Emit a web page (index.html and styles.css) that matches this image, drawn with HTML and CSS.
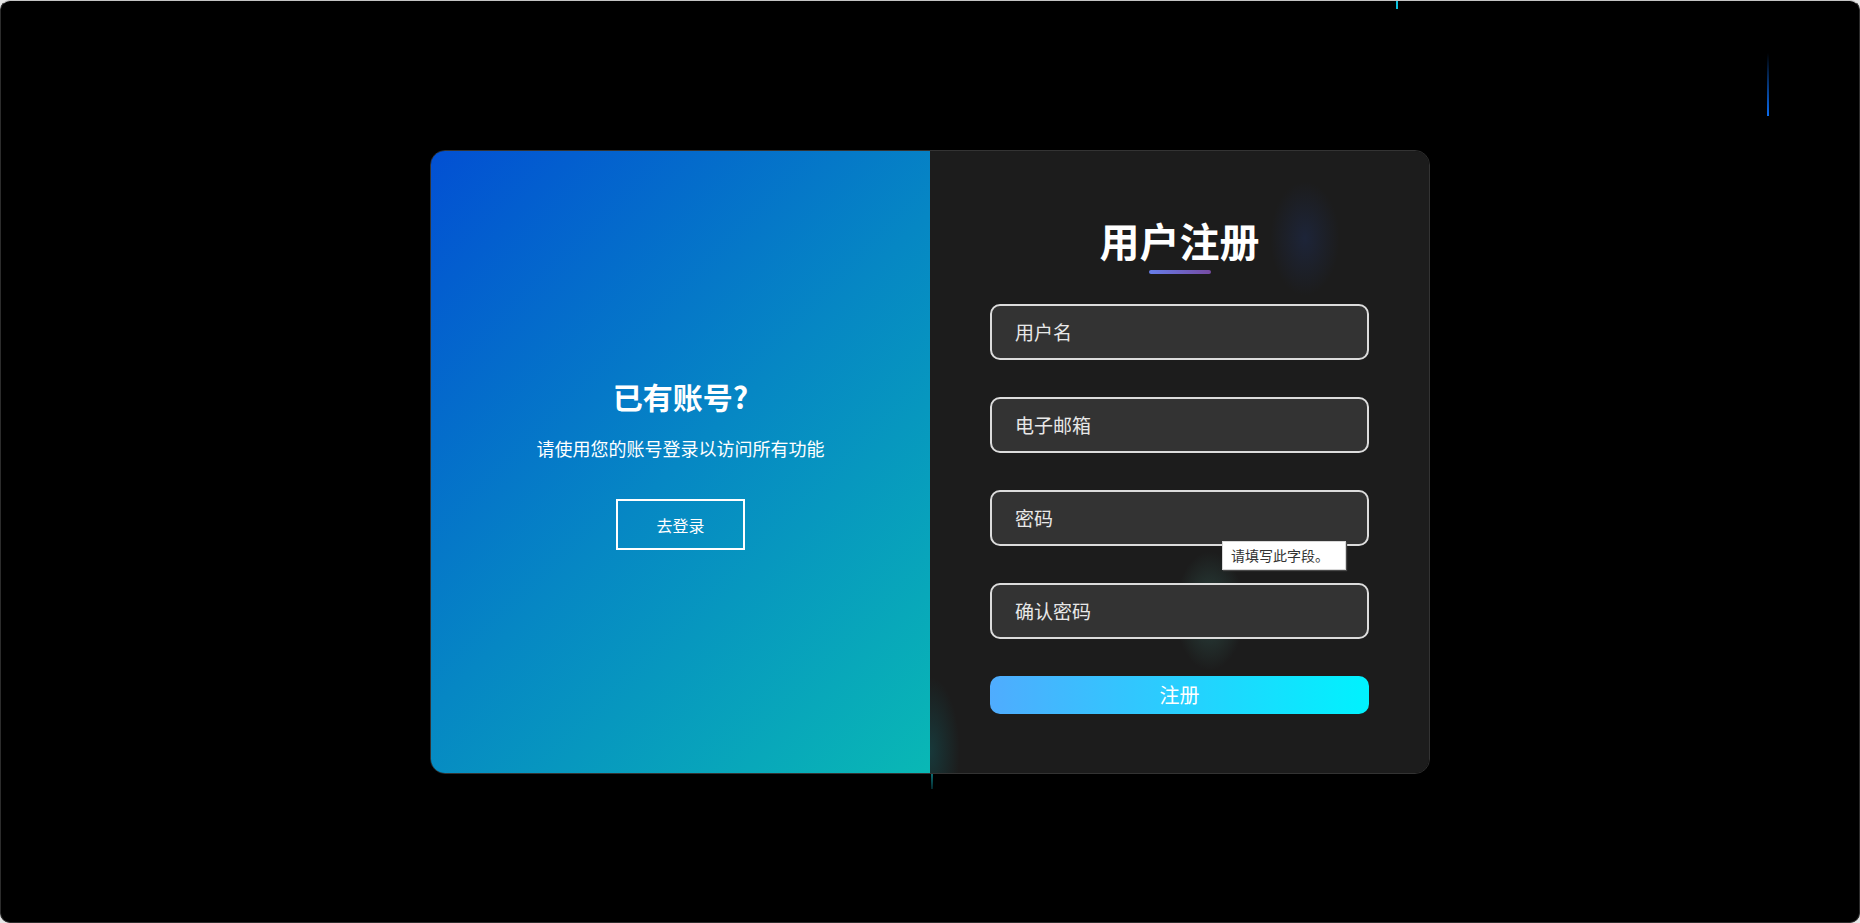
FILE: index.html
```html
<!DOCTYPE html>
<html lang="zh-CN">
<head>
<meta charset="utf-8">
<title>用户注册</title>
<link rel="stylesheet" href="styles.css">
</head>
<body>
<div class="screen">
  <span class="meteor meteor-a"></span>
  <span class="meteor meteor-b"></span>
  <span class="meteor meteor-c"></span>
  <div class="card">
    <section class="panel-left">
      <h2 class="left-title">已有账号?</h2>
      <p class="left-text">请使用您的账号登录以访问所有功能</p>
      <button class="ghost-btn" type="button">去登录</button>
    </section>
    <section class="panel-right">
      <span class="glow glow-a"></span>
      <span class="glow glow-b"></span>
      <span class="glow glow-c"></span>
      <h1 class="form-title">用户注册</h1>
      <div class="title-bar"></div>
      <form class="form">
        <input class="field" type="text" placeholder="用户名">
        <input class="field" type="email" placeholder="电子邮箱">
        <input class="field" type="password" placeholder="密码">
        <input class="field" type="password" placeholder="确认密码">
        <button class="submit-btn" type="button">注册</button>
      </form>
      <div class="tip">请填写此字段。</div>
    </section>
  </div>
</div>
</body>
</html>
```
FILE: styles.css
```css
* {
  box-sizing: border-box;
}

html, body {
  margin: 0;
  padding: 0;
  background: #e6e6e6;
  font-family: "Noto Sans CJK SC", "Noto Sans", sans-serif;
}

.screen {
  position: relative;
  width: 100vw;
  height: 100vh;
  background: #000;
  border: 1px solid #2c2c2c;
  border-top-color: #c4c4c4;
  border-radius: 10px;
  overflow: hidden;
  display: flex;
  align-items: center;
  justify-content: center;
}

.meteor {
  position: absolute;
  width: 2px;
  display: block;
}

.meteor-a {
  left: 1395px;
  top: 0;
  height: 8px;
  background: #0cc0dc;
}

.meteor-b {
  left: 1766px;
  top: 52px;
  height: 63px;
  width: 2px;
  background: linear-gradient(to bottom, rgba(10, 100, 240, 0), #0a6cf0);
}

.meteor-c {
  left: 930px;
  top: 772px;
  height: 16px;
  background: linear-gradient(to bottom, #0b7278, rgba(11, 100, 110, 0.4));
}

.card {
  width: 1000px;
  height: 624px;
  display: flex;
  border: 1px solid #333;
  border-radius: 15px;
  overflow: hidden;
  position: relative;
  z-index: 1;
}

.panel-left {
  flex: 0 0 499px;
  background: linear-gradient(135deg, #0250d3 0%, #0687c4 50%, #09b8b5 100%);
  display: flex;
  flex-direction: column;
  align-items: center;
  justify-content: center;
  padding-top: 5px;
  color: #fff;
}

.left-title {
  margin: 0;
  font-size: 30px;
  line-height: 36px;
  font-weight: 700;
}

.left-text {
  margin: 21px 0 0;
  font-size: 18px;
  line-height: 26px;
}

.ghost-btn {
  margin-top: 38px;
  width: 129px;
  height: 51px;
  background: transparent;
  border: 2px solid #fff;
  color: #fff;
  font-family: inherit;
  font-size: 16px;
  line-height: 22px;
  padding: 0;
}

.panel-right {
  flex: 1;
  position: relative;
  overflow: hidden;
  background: #1c1c1c;
  padding: 65px 60px 0;
  display: flex;
  flex-direction: column;
  align-items: center;
}

.glow {
  position: absolute;
  display: block;
  border-radius: 50%;
  pointer-events: none;
}

.glow-a {
  left: 340px;
  top: 30px;
  width: 70px;
  height: 115px;
  background: radial-gradient(ellipse at center, rgba(30, 45, 85, 0.5) 0%, rgba(30, 45, 85, 0) 70%);
}

.glow-b {
  left: 245px;
  top: 400px;
  width: 70px;
  height: 120px;
  background: radial-gradient(ellipse at center, rgba(60, 115, 105, 0.45) 0%, rgba(60, 115, 105, 0) 70%);
}

.glow-c {
  left: -30px;
  top: 525px;
  width: 60px;
  height: 150px;
  background: radial-gradient(ellipse at center, rgba(15, 110, 115, 0.35) 0%, rgba(15, 110, 115, 0) 70%);
}

.form-title {
  position: relative;
  margin: 0;
  font-size: 40px;
  line-height: 48px;
  font-weight: 700;
  color: #fff;
}

.title-bar {
  position: relative;
  width: 62px;
  height: 4px;
  margin-top: 6px;
  border-radius: 2px;
  background: linear-gradient(90deg, #667eea, #764ba2);
}

.form {
  position: relative;
  width: 100%;
  margin-top: 30px;
  display: flex;
  flex-direction: column;
  gap: 37px;
}

.field {
  width: 100%;
  height: 56px;
  border: 2px solid #dcdcdc;
  border-radius: 10px;
  background: #333;
  padding: 0 23px;
  color: #fff;
  font-family: inherit;
  font-size: 19px;
  outline: none;
}

.field::placeholder {
  color: #e8e8e8;
  opacity: 1;
}

.submit-btn {
  width: 100%;
  height: 38px;
  border: none;
  border-radius: 10px;
  background: linear-gradient(90deg, #4facfe, #00f2fe);
  color: #fff;
  font-family: inherit;
  font-size: 20px;
  line-height: 26px;
  padding: 0;
}

.tip {
  position: absolute;
  left: 292px;
  top: 390px;
  width: 124px;
  height: 29px;
  background: #fff;
  border: 1px solid #d8d8d8;
  box-shadow: 1px 1px 1px #4a4a4a;
  color: #333;
  font-size: 14px;
  line-height: 27px;
  padding: 0 0 0 8px;
  z-index: 2;
}
```
